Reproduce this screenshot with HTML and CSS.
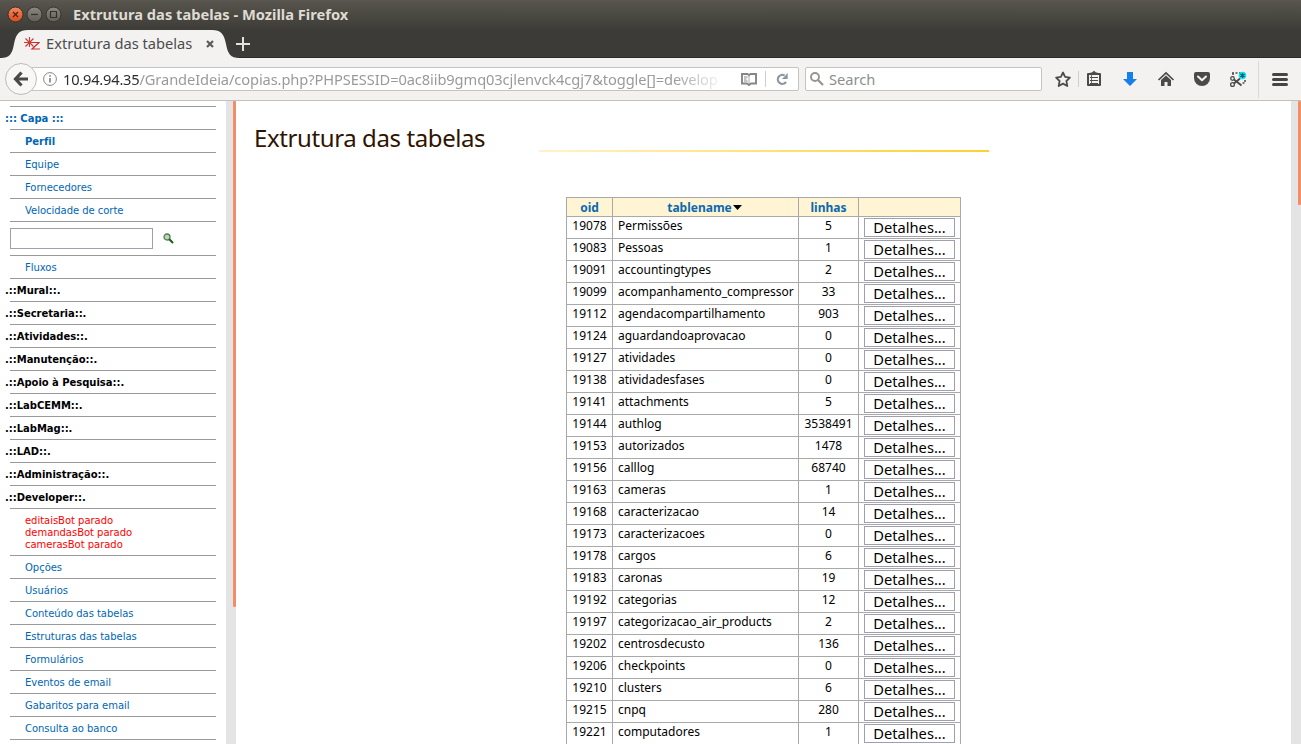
FILE: index.html
```
<!DOCTYPE html>
<html lang="pt-BR">
<head>
<meta charset="utf-8">
<title>Extrutura das tabelas</title>
<link rel="stylesheet" href="styles.css">
</head>
<body>
<div class="window">
<header class="titlebar">
<svg class="win-buttons" width="62" height="30" viewBox="0 0 62 30">
<defs><linearGradient id="or" x1="0" y1="0" x2="0" y2="1"><stop offset="0" stop-color="#f58a63"/><stop offset="1" stop-color="#dc4a17"/></linearGradient><linearGradient id="gr" x1="0" y1="0" x2="0" y2="1"><stop offset="0" stop-color="#8b8981"/><stop offset="1" stop-color="#5f5d56"/></linearGradient></defs>
<circle cx="15.500" cy="14.500" r="7.500" fill="url(#or)" stroke="#35332e"/><path d="M13 12l5 5M18 12l-5 5" stroke="#4b2414" stroke-width="1.300"/>
<circle cx="34.500" cy="14.500" r="7.500" fill="url(#gr)" stroke="#35332e"/><path d="M31 14.500h7" stroke="#33312d" stroke-width="1.200"/>
<circle cx="53.500" cy="14.500" r="7.500" fill="url(#gr)" stroke="#35332e"/><path d="M50.500 11.500h6v6h-6z" fill="none" stroke="#33312d" stroke-width="1.200"/>
</svg>
<span class="win-title">Extrutura das tabelas - Mozilla Firefox</span>
</header>
<div class="tabbar">
<div class="tab">
<svg class="tab-shape" width="240" height="28" viewBox="0 0 240 28"><path d="M0 28C10 28 12 24 14 14C16 4 19 0 28 0H212C221 0 224 4 226 14C228 24 230 28 240 28Z" fill="#f3f2f1"/></svg>
<svg class="favicon" width="16" height="14" viewBox="0 0 16 14"><path d="M0 5.500h11M5.500 0v10M1.500 1.500l8 8M9.500 1.500l-8 8" stroke="#cc3a36" stroke-width="1.100"/><path d="M8 5.500h7L8 12h8" fill="none" stroke="#c9302c" stroke-width="1.200"/></svg>
<span class="tab-title">Extrutura das tabelas</span>
<svg class="tab-close" width="8" height="8" viewBox="0 0 8 8"><path d="M1 1l6 6M7 1L1 7" stroke="#5b5b59" stroke-width="2.200"/></svg>
</div>
<svg class="new-tab" width="14" height="14" viewBox="0 0 14 14"><path d="M0 7h14M7 0v14" stroke="#e3e2df" stroke-width="2"/></svg>
</div>
<nav class="toolbar">
<div class="back"><svg width="16" height="16" viewBox="0 0 16 16"><path d="M8.500 1.500L2.500 8l6 6.500M3 8h12" fill="none" stroke="#494949" stroke-width="3.200"/></svg></div>
<div class="urlbar">
<svg class="info" width="14" height="14" viewBox="0 0 14 14"><circle cx="7" cy="7" r="6.400" fill="none" stroke="#858585"/><path d="M7 6v4.500M7 3.300v1.500" stroke="#777" stroke-width="1.500"/></svg>
<div class="url"><span class="host">10.94.94.35</span><span class="path">/GrandeIdeia/copias.php?PHPSESSID=0ac8iib9gmq03cjlenvck4cgj7&amp;toggle[]=develop</span></div>
<svg class="reader" width="16" height="13" viewBox="0 0 16 13"><path d="M1 1h5.500L8 2.200L9.500 1H15v9.500H10L8 12L6 10.500H1z" fill="none" stroke="#858585" stroke-width="1.900"/><path d="M8 2v9" stroke="#aaa"/><path d="M3 4h3.500M3 6h2.500M3 8h3.500" stroke="#858585"/></svg>
<span class="url-sep"></span>
<svg class="reload" width="12" height="12" viewBox="0 0 12 12"><path d="M8.600 2.400A4.500 4.500 0 1 0 10 9" fill="none" stroke="#8a96a3" stroke-width="2.200"/><path d="M11.700 0v6H6z" fill="#8a96a3"/></svg>
</div>
<div class="search">
<svg width="14" height="14" viewBox="0 0 14 14"><circle cx="5" cy="5" r="4" fill="none" stroke="#959595" stroke-width="1.900"/><path d="M8 8l5 5" stroke="#959595" stroke-width="2.300"/></svg>
<span class="search-text">Search</span>
</div>
<svg class="actions" width="256" height="42" viewBox="1045 58 256 42">
<path d="M1063 72.500l2.100 4.400 4.800.7-3.500 3.400.9 5-4.300-2.400-4.300 2.400.9-5-3.500-3.400 4.800-.7z" fill="none" stroke="#4d4d4d" stroke-width="1.800" stroke-linejoin="round"/>
<path d="M1078.500 71v16" stroke="#cfcecc"/>
<path d="M1088 74h12v11h-12z" fill="none" stroke="#4a4a4a" stroke-width="2" stroke-linejoin="round"/><path d="M1090.500 74v-1.500h1.500l2-1.700 2 1.700h1.500v1.500z" fill="#4a4a4a"/><path d="M1090 77.500h8M1090 80.500h8M1090 83.500h8" stroke="#4a4a4a" stroke-width="1"/><path d="M1091.500 75v9" stroke="#4a4a4a" stroke-width=".8"/>
<path d="M1127 72h6v7h4l-7 7-7-7h4z" fill="#1780e8"/>
<path d="M1158.500 80l7.500-7 7.500 7" fill="none" stroke="#4a4a4a" stroke-width="1.700"/><path d="M1161 80l5-4.600 5 4.600v6h-3.500v-4h-3v4H1161z" fill="#4a4a4a"/>
<path d="M1196 72h12q2 0 2 2v4a8 8 0 0 1-16 0v-4q0-2 2-2z" fill="#4a4a4a"/><path d="M1198 76.500l4 3.800 4-3.800" fill="none" stroke="#f3f2f1" stroke-width="2" stroke-linecap="round" stroke-linejoin="round"/>
<path d="M1232 73h9M1233 73v4M1245 80v3h-3" fill="none" stroke="#4a4a4a" stroke-width="1.500" stroke-dasharray="2 1.500"/><circle cx="1232.500" cy="78.500" r="1.800" fill="none" stroke="#4a4a4a" stroke-width="1.300"/><circle cx="1232.500" cy="84.500" r="1.900" fill="none" stroke="#4a4a4a" stroke-width="1.300"/><path d="M1234 79.500l7.500 6M1234 83.500l6-5" stroke="#4a4a4a" stroke-width="1.900"/><circle cx="1242.500" cy="75.500" r="3.700" fill="#00e5f5"/><path d="M1242.500 73v5M1240.400 74.300l4.200 2.400M1244.600 74.300l-4.200 2.400" stroke="#245366" stroke-width="1.200"/>
<path d="M1258.500 61v37" stroke="#dad9d7"/>
<path d="M1273.500 74.500h13M1273.500 79.500h13M1273.500 84.500h13" stroke="#454545" stroke-width="3" stroke-linecap="round"/>
</svg>
</nav>
<div class="page">
<aside class="sidebar">
<ul class="menu">
<li class="top blue"><a>::: Capa :::</a></li>
<li class="strong"><a>Perfil</a></li>
<li><a>Equipe</a></li>
<li><a>Fornecedores</a></li>
<li><a>Velocidade de corte</a></li>
<li class="find"><input type="text" class="find-input" aria-label="Busca"><svg width="11" height="11" viewBox="0 0 11 11"><circle cx="4" cy="4" r="3" fill="#b9d8b4" stroke="#567a52" stroke-width="1.300"/><path d="M6.300 6.300l3.700 3.700" stroke="#116311" stroke-width="2"/></svg></li>
<li><a>Fluxos</a></li>
<li class="top">.::Mural::.</li>
<li class="top">.::Secretaria::.</li>
<li class="top">.::Atividades::.</li>
<li class="top">.::Manutenção::.</li>
<li class="top">.::Apoio à Pesquisa::.</li>
<li class="top">.::LabCEMM::.</li>
<li class="top">.::LabMag::.</li>
<li class="top">.::LAD::.</li>
<li class="top">.::Administração::.</li>
<li class="top">.::Developer::.</li>
<li class="alert">editaisBot parado<br>demandasBot parado<br>camerasBot parado</li>
<li><a>Opções</a></li>
<li><a>Usuários</a></li>
<li><a>Conteúdo das tabelas</a></li>
<li><a>Estruturas das tabelas</a></li>
<li><a>Formulários</a></li>
<li><a>Eventos de email</a></li>
<li><a>Gabaritos para email</a></li>
<li><a>Consulta ao banco</a></li>
<li></li>
</ul>
</aside>
<div class="scroll scroll-left"><div class="thumb"></div></div>
<main class="content">
<div class="heading"><h1>Extrutura das tabelas</h1><div class="rule"></div></div>
<table class="grid">
<colgroup><col class="c-oid"><col class="c-name"><col class="c-rows"><col class="c-act"></colgroup>
<thead><tr><th>oid</th><th>tablename<svg class="sort" width="9" height="5" viewBox="0 0 9 5"><path d="M0 0h9L4.500 5z"/></svg></th><th>linhas</th><th></th></tr></thead>
<tbody>
<tr><td>19078</td><td>Permissões</td><td>5</td><td><button>Detalhes...</button></td></tr>
<tr><td>19083</td><td>Pessoas</td><td>1</td><td><button>Detalhes...</button></td></tr>
<tr><td>19091</td><td>accountingtypes</td><td>2</td><td><button>Detalhes...</button></td></tr>
<tr><td>19099</td><td>acompanhamento_compressor</td><td>33</td><td><button>Detalhes...</button></td></tr>
<tr><td>19112</td><td>agendacompartilhamento</td><td>903</td><td><button>Detalhes...</button></td></tr>
<tr><td>19124</td><td>aguardandoaprovacao</td><td>0</td><td><button>Detalhes...</button></td></tr>
<tr><td>19127</td><td>atividades</td><td>0</td><td><button>Detalhes...</button></td></tr>
<tr><td>19138</td><td>atividadesfases</td><td>0</td><td><button>Detalhes...</button></td></tr>
<tr><td>19141</td><td>attachments</td><td>5</td><td><button>Detalhes...</button></td></tr>
<tr><td>19144</td><td>authlog</td><td>3538491</td><td><button>Detalhes...</button></td></tr>
<tr><td>19153</td><td>autorizados</td><td>1478</td><td><button>Detalhes...</button></td></tr>
<tr><td>19156</td><td>calllog</td><td>68740</td><td><button>Detalhes...</button></td></tr>
<tr><td>19163</td><td>cameras</td><td>1</td><td><button>Detalhes...</button></td></tr>
<tr><td>19168</td><td>caracterizacao</td><td>14</td><td><button>Detalhes...</button></td></tr>
<tr><td>19173</td><td>caracterizacoes</td><td>0</td><td><button>Detalhes...</button></td></tr>
<tr><td>19178</td><td>cargos</td><td>6</td><td><button>Detalhes...</button></td></tr>
<tr><td>19183</td><td>caronas</td><td>19</td><td><button>Detalhes...</button></td></tr>
<tr><td>19192</td><td>categorias</td><td>12</td><td><button>Detalhes...</button></td></tr>
<tr><td>19197</td><td>categorizacao_air_products</td><td>2</td><td><button>Detalhes...</button></td></tr>
<tr><td>19202</td><td>centrosdecusto</td><td>136</td><td><button>Detalhes...</button></td></tr>
<tr><td>19206</td><td>checkpoints</td><td>0</td><td><button>Detalhes...</button></td></tr>
<tr><td>19210</td><td>clusters</td><td>6</td><td><button>Detalhes...</button></td></tr>
<tr><td>19215</td><td>cnpq</td><td>280</td><td><button>Detalhes...</button></td></tr>
<tr><td>19221</td><td>computadores</td><td>1</td><td><button>Detalhes...</button></td></tr>
</tbody>
</table>
</main>
<div class="scroll scroll-right"><div class="thumb"></div></div>
</div>
</div>
</body>
</html>
```
FILE: styles.css
```
* { box-sizing: border-box; }
body { margin: 0; background: #fff; overflow: hidden; font-family: "Noto Sans", sans-serif; }
svg { display: block; flex: none; }
.window { width: 1301px; height: 744px; display: flex; flex-direction: column; overflow: hidden; }

.titlebar { flex: none; height: 30px; display: flex; align-items: center; background: linear-gradient(#5a5850 0, #55534b 3px, #3d3c38 30px); }
.win-title { margin-left: 11px; padding-bottom: 2px; color: #dfdbd2; font-size: 14.67px; font-weight: 700; line-height: 20px; white-space: nowrap; }

.tabbar { flex: none; height: 28px; display: flex; align-items: center; background: #3c3b37; border-bottom: 1px solid #2b2a27; }
.tab { position: relative; width: 236px; height: 28px; display: flex; align-items: center; padding-left: 24px; }
.tab-shape { position: absolute; left: 0; top: 0; }
.favicon, .tab-title, .tab-close { position: relative; }
.tab-title { margin-left: 6px; padding-bottom: 2px; width: 160px; font-size: 14.67px; line-height: 20px; color: #4c4c4c; white-space: nowrap; }

.toolbar { flex: none; height: 43px; display: flex; align-items: center; background: #f3f2f1; border-bottom: 1px solid #c3c0bc; }
.back { position: relative; flex: none; margin-left: 5px; width: 32px; height: 32px; border: 1px solid #bebcb9; border-radius: 50%; background: #f8f7f6; display: flex; align-items: center; justify-content: center; }
.urlbar { flex: none; margin-left: -6px; width: 768px; height: 24px; padding-left: 11px; border: 1px solid #c5c3c0; border-radius: 2px; background: #fff; display: flex; align-items: center; }
.url { flex: none; margin-left: 6px; width: 662px; padding-bottom: 1px; white-space: nowrap; font-size: 14.67px; line-height: 20px; color: #9a9a9a; mask-image: linear-gradient(90deg, #000 610px, transparent 662px); }
.host { color: #2e2e2e; letter-spacing: -0.22px; }
.path { letter-spacing: -0.1px; }
.reader { margin-left: 16px; }
.url-sep { margin: 0 10px 0 8px; width: 1px; height: 16px; background: #cfcecc; }
.search { flex: none; margin-left: 6px; width: 237px; height: 24px; padding-left: 4px; border: 1px solid #c5c3c0; border-radius: 2px; background: #fff; display: flex; align-items: center; }
.search-text { margin-left: 5px; padding-bottom: 1px; font-size: 14.67px; line-height: 20px; color: #8e8e8e; }
.actions { margin-left: 3px; }

.page { flex: 1; min-height: 0; display: flex; }
.sidebar { flex: none; width: 226px; padding-top: 5px; overflow: hidden; }
.menu { list-style: none; margin: 0 10px; padding: 0; font: 10px/12px "DejaVu Sans", sans-serif; letter-spacing: -0.03px; color: #0066b3; }
.menu li { border-top: 1px solid #999; padding: 6px 0 4px 15px; white-space: nowrap; }
.menu .top { font-weight: 700; color: #000; padding-left: 0; text-indent: -5px; }
.menu .strong { font-weight: 700; }
.menu .blue { color: #0066b3; }
.menu .alert { color: #f00; }
.menu .find { display: flex; align-items: center; height: 34px; padding: 0; gap: 10px; }
.find-input { width: 143px; height: 21px; border: 1px solid #a09fad; background: #fff; padding: 0; }

.scroll { flex: none; width: 10px; background: #e4e4e4; display: flex; justify-content: flex-end; }
.thumb { width: 3px; background: #f08e68; border-radius: 1px; }
.scroll-left .thumb { height: 506px; }
.scroll-right .thumb { height: 104px; }

.content { width: 1055px; overflow: hidden; }
.heading { display: flex; height: 96px; padding-left: 18px; }
.heading h1 { margin: 21px 0 0; width: 285px; font: 400 24px/32px "Noto Sans", sans-serif; letter-spacing: -0.4px; color: #2f1400; white-space: nowrap; }
.rule { width: 450px; height: 2px; margin-top: 49px; background: linear-gradient(90deg, #fff3c9, #ffd02e); }

.grid { margin-left: 330px; width: 395px; table-layout: fixed; border-collapse: separate; border-spacing: 0; border: 1px solid #a9a9a9; border-width: 1px 0 0 1px; font-size: 12px; line-height: 15px; color: #000; }
.c-oid { width: 46px; }
.c-name { width: 186px; }
.c-rows { width: 60px; }
.c-act { width: 102px; }
.grid th, .grid td { border: 1px solid #a9a9a9; border-width: 0 1px 1px 0; padding: 0; }
.grid th { height: 19px; background: #fff4d4; color: #0b69b0; font-weight: 700; }
.grid td { height: 22px; padding-top: 1px; vertical-align: top; text-align: center; white-space: nowrap; }
.grid td:nth-child(2) { text-align: left; padding-left: 5px; }
.grid td:nth-child(4) { padding: 1px 0 0 5px; text-align: left; }
.sort { display: inline-block; margin-left: 1px; vertical-align: 2px; }
.grid th:nth-child(2) { padding-right: 2px; }
.grid button { display: block; width: 91px; height: 19px; padding: 0; border: 1px solid #a09fad; background: #fff; color: #000; font: 14.67px/15px "Noto Sans", sans-serif; }
```
